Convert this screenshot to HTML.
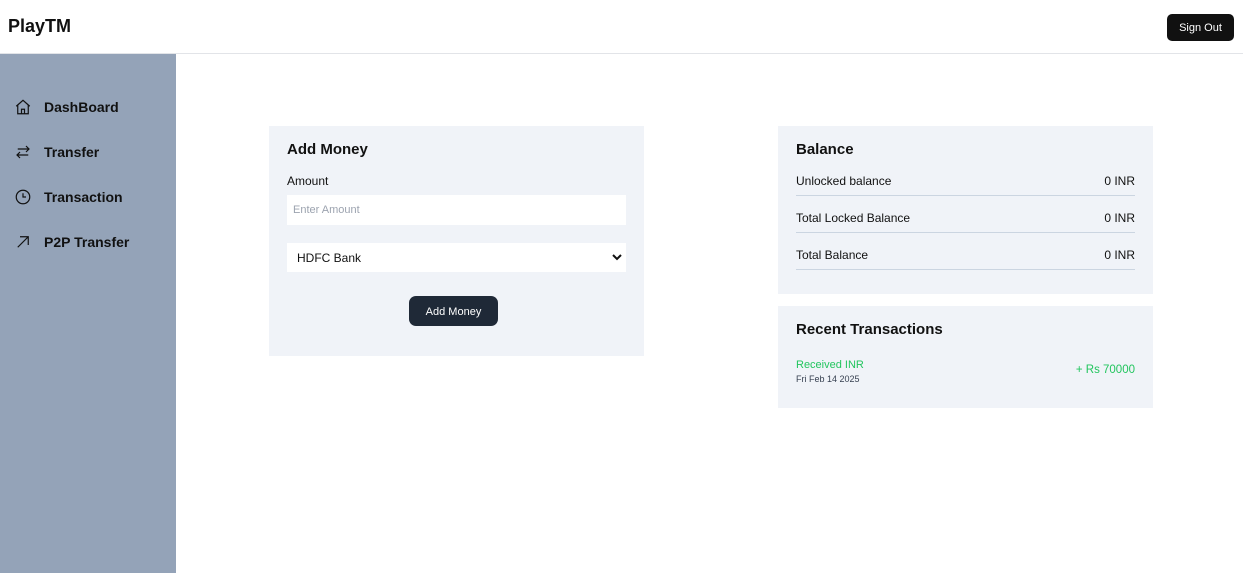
<!DOCTYPE html>
<html><head><meta charset="utf-8"><style>
*{box-sizing:border-box;margin:0;padding:0}
body{width:1243px;height:573px;overflow:hidden;font-family:"Liberation Sans",sans-serif;background:#fff;color:#111;position:relative}
.top{position:absolute;left:0;top:0;width:1243px;height:54px;border-bottom:1px solid #e2e4e8}
.logo{position:absolute;left:8px;top:16px;font-size:18px;font-weight:bold}
.so{position:absolute;left:1167px;top:14px;width:67px;height:27px;background:#111;color:#fff;border-radius:5px;font-size:11px;text-align:center;line-height:29px}
.side{position:absolute;left:0;top:54px;width:176px;height:519px;background:#94a3b8}
.nav{position:absolute;left:14px;display:flex;align-items:center;font-size:14px;font-weight:bold;color:#111}
.nav svg{width:18px;height:18px;margin-right:12px}
.card{position:absolute;background:#f0f3f8}
h3{font-size:15px;font-weight:bold;position:absolute;left:18px;top:15px}
.row{position:absolute;left:18px;right:18px;border-bottom:1px solid #cbd5e1;font-size:12px;display:flex;justify-content:space-between}
</style></head><body>
<div class="top"><div class="logo">PlayTM</div><div class="so">Sign Out</div></div>
<div class="side">
<div class="nav" style="top:44px"><svg viewBox="0 0 24 24" fill="none" stroke="#111" stroke-width="1.6"><path d="M3 11l9-8 9 8M5 9.5V21h14V9.5M10 21v-6h4v6"/></svg>DashBoard</div>
<div class="nav" style="top:89px"><svg viewBox="0 0 24 24" fill="none" stroke="#111" stroke-width="1.6"><path d="M20 8H5m11-4l4 4-4 4M4 16h15M8 12l-4 4 4 4"/></svg>Transfer</div>
<div class="nav" style="top:134px"><svg viewBox="0 0 24 24" fill="none" stroke="#111" stroke-width="1.6"><circle cx="12" cy="12" r="9"/><path d="M12 7v5h4"/></svg>Transaction</div>
<div class="nav" style="top:179px"><svg viewBox="0 0 24 24" fill="none" stroke="#111" stroke-width="1.6"><path d="M5 19L19 5M8 5h11v11"/></svg>P2P Transfer</div>
</div>
<div class="card" style="left:269px;top:126px;width:375px;height:230px">
<h3>Add Money</h3>
<div style="position:absolute;left:18px;top:48px;font-size:12px">Amount</div>
<div style="position:absolute;left:18px;top:69px;width:339px;height:30px;background:#fff;font-size:11px;color:#9ca3af;padding:9px 6px">Enter Amount</div>
<div style="position:absolute;left:18px;top:117px;width:339px;height:29px;background:#fff;font-size:12px;padding:8px 10px">HDFC Bank<svg style="position:absolute;right:4px;top:10px" width="10" height="8" viewBox="0 0 10 8"><path d="M1 2l4 4 4-4" fill="none" stroke="#111" stroke-width="2"/></svg></div>
<div style="position:absolute;left:140px;top:170px;width:89px;height:30px;background:#1f2937;color:#fff;border-radius:7px;font-size:11px;text-align:center;line-height:32px">Add Money</div>
</div>
<div class="card" style="left:778px;top:126px;width:375px;height:168px">
<h3>Balance</h3>
<div class="row" style="top:0;padding-top:48px;height:70px"><span>Unlocked balance</span><span>0 INR</span></div>
<div class="row" style="top:70px;height:37px;padding-top:15px"><span>Total Locked Balance</span><span>0 INR</span></div>
<div class="row" style="top:107px;height:37px;padding-top:15px"><span>Total Balance</span><span>0 INR</span></div>
</div>
<div class="card" style="left:778px;top:306px;width:375px;height:102px">
<h3>Recent Transactions</h3>
<div style="position:absolute;left:18px;top:53px;font-size:11px;color:#22c55e">Received INR</div>
<div style="position:absolute;left:18px;top:68px;font-size:9px;color:#374151">Fri Feb 14 2025</div>
<div style="position:absolute;right:18px;top:58px;font-size:11.5px;color:#22c55e">+ Rs 70000</div>
</div>
</body></html>
